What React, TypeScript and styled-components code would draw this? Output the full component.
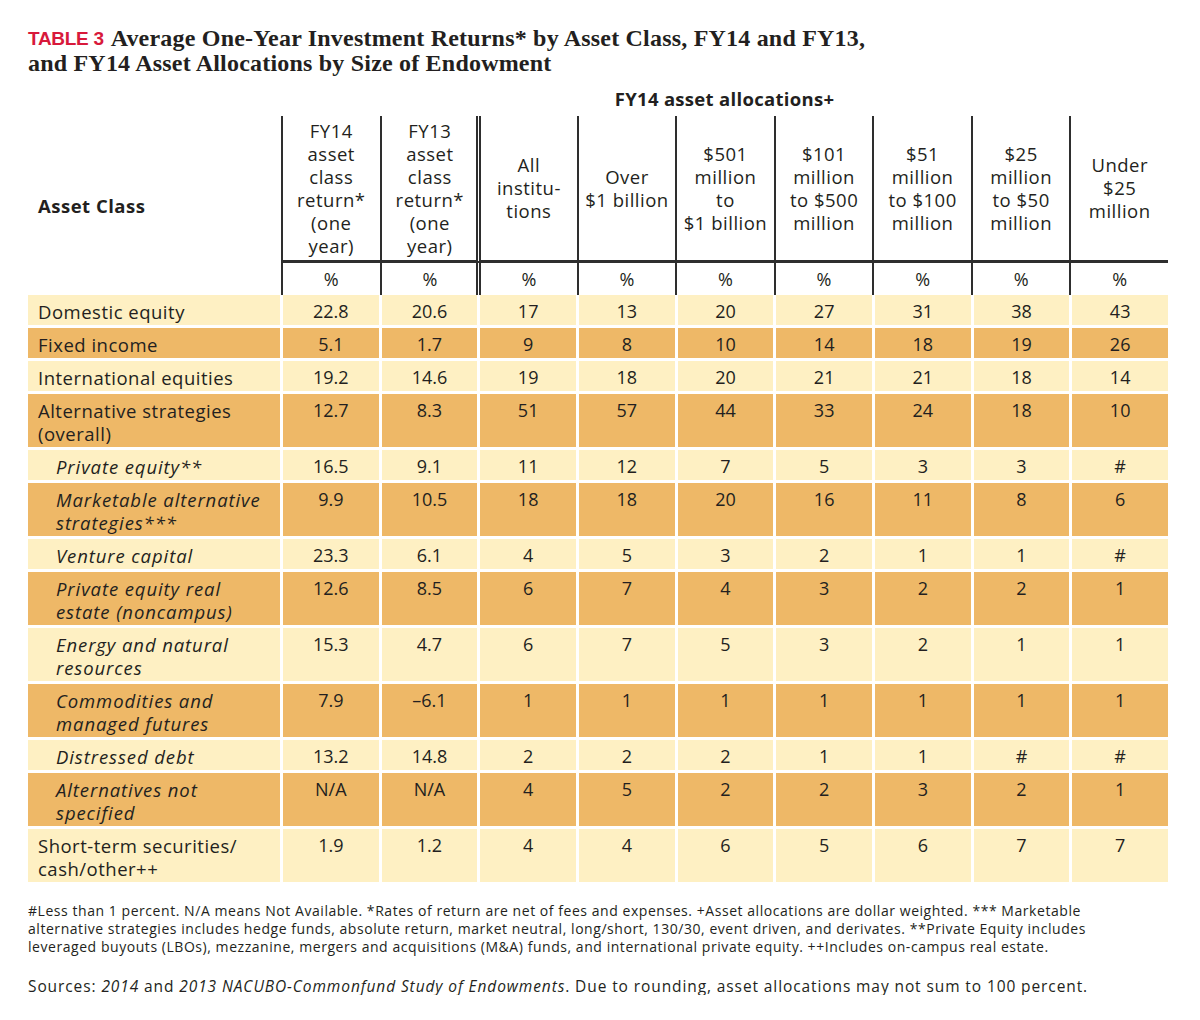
import React from 'react';
import styled, { createGlobalStyle } from 'styled-components';

const GlobalStyle = createGlobalStyle`
  html, body { margin: 0; padding: 0; background: #ffffff; }
  body {
    font-family: "Open Sans", "Liberation Sans", sans-serif;
    color: #231f20;
  }
`;

const Page = styled.div`
  width: 1200px;
  box-sizing: border-box;
  padding: 26px 0 0 28px;
`;

const Title = styled.h1`
  margin: 0;
  font-family: "Liberation Serif", serif;
  font-weight: 700;
  font-size: 24px;
  line-height: 24px;
  letter-spacing: 0.2px;
  color: #231f20;
`;

const TableLabel = styled.span`
  font-family: "Liberation Sans", "Open Sans", sans-serif;
  font-weight: 700;
  font-size: 19px;
  letter-spacing: -0.3px;
  vertical-align: 1.5px;
  color: #d8193b;
  margin-right: 7px;
`;

const Table = styled.div`
  width: 1140px;
  margin-top: 14px;
`;

const HeaderGrid = styled.div`
  display: grid;
  grid-template-columns: 253px repeat(9, 1fr);
  grid-template-rows: 23px 151px 32px;
`;

const GroupTitle = styled.div`
  grid-column: 2 / -1;
  grid-row: 1;
  text-align: center;
  font-weight: 700;
  font-size: 18.5px;
  letter-spacing: 0.3px;
  line-height: 23px;
  margin-top: -2px;
`;

const CornerLabel = styled.div`
  grid-column: 1;
  grid-row: 2 / 4;
  display: flex;
  align-items: center;
  padding: 4px 0 0 10px;
  font-weight: 700;
  font-size: 18.5px;
  letter-spacing: 0.5px;
`;

const HeadCell = styled.div<{ $double?: boolean }>`
  grid-row: 2;
  box-sizing: border-box;
  display: flex;
  align-items: center;
  justify-content: center;
  text-align: center;
  font-size: 18.5px;
  letter-spacing: 0.5px;
  line-height: 23px;
  white-space: nowrap;
  border-left: ${p => (p.$double ? '5px double #2e2e2e' : '2px solid #2e2e2e')};
  margin-left: ${p => (p.$double ? '-2px' : '0')};
  border-bottom: 3px solid #2e2e2e;
  margin-top: 4px;
`;

const UnitCell = styled.div<{ $double?: boolean }>`
  grid-row: 3;
  box-sizing: border-box;
  display: flex;
  align-items: center;
  justify-content: center;
  font-size: 18px;
  border-left: ${p => (p.$double ? '5px double #2e2e2e' : '2px solid #2e2e2e')};
  margin-left: ${p => (p.$double ? '-2px' : '0')};
`;

const BodyGrid = styled.div`
  display: grid;
  grid-template-columns: 252px repeat(9, 1fr);
  gap: 3px;
`;

const Cell = styled.div<{ $tone: 'light' | 'dark' }>`
  background: ${p => (p.$tone === 'light' ? '#fef0c3' : '#eeb867')};
  padding: 5px 0 2px;
  font-size: 18px;
  line-height: 23px;
  text-align: center;
`;

const LabelCell = styled(Cell)<{ $sub?: boolean }>`
  text-align: left;
  padding-left: ${p => (p.$sub ? '28px' : '10px')};
  font-style: ${p => (p.$sub ? 'italic' : 'normal')};
  font-size: 18.5px;
  letter-spacing: ${p => (p.$sub ? '0.9px' : '0.5px')};
  white-space: nowrap;
`;

const Notes = styled.p`
  margin: 20px 0 0;
  font-size: 14px;
  line-height: 18px;
  letter-spacing: 0.55px;
  white-space: nowrap;
`;

const Sources = styled.p`
  margin: 21px 0 0;
  font-size: 15.5px;
  line-height: 18px;
  letter-spacing: 0.9px;
  white-space: nowrap;
`;

type Row = { label: string[]; sub?: boolean; values: string[] };

const headers: { lines: string[]; double?: boolean }[] = [
  { lines: ['FY14', 'asset', 'class', 'return*', '(one', 'year)'] },
  { lines: ['FY13', 'asset', 'class', 'return*', '(one', 'year)'] },
  { lines: ['All', 'institu-', 'tions'], double: true },
  { lines: ['Over', '$1 billion'] },
  { lines: ['$501', 'million', 'to', '$1 billion'] },
  { lines: ['$101', 'million', 'to $500', 'million'] },
  { lines: ['$51', 'million', 'to $100', 'million'] },
  { lines: ['$25', 'million', 'to $50', 'million'] },
  { lines: ['Under', '$25', 'million'] },
];

const rows: Row[] = [
  { label: ['Domestic equity'], values: ['22.8', '20.6', '17', '13', '20', '27', '31', '38', '43'] },
  { label: ['Fixed income'], values: ['5.1', '1.7', '9', '8', '10', '14', '18', '19', '26'] },
  { label: ['International equities'], values: ['19.2', '14.6', '19', '18', '20', '21', '21', '18', '14'] },
  { label: ['Alternative strategies', '(overall)'], values: ['12.7', '8.3', '51', '57', '44', '33', '24', '18', '10'] },
  { label: ['Private equity**'], sub: true, values: ['16.5', '9.1', '11', '12', '7', '5', '3', '3', '#'] },
  { label: ['Marketable alternative', 'strategies***'], sub: true, values: ['9.9', '10.5', '18', '18', '20', '16', '11', '8', '6'] },
  { label: ['Venture capital'], sub: true, values: ['23.3', '6.1', '4', '5', '3', '2', '1', '1', '#'] },
  { label: ['Private equity real', 'estate (noncampus)'], sub: true, values: ['12.6', '8.5', '6', '7', '4', '3', '2', '2', '1'] },
  { label: ['Energy and natural', 'resources'], sub: true, values: ['15.3', '4.7', '6', '7', '5', '3', '2', '1', '1'] },
  { label: ['Commodities and', 'managed futures'], sub: true, values: ['7.9', '\u20136.1', '1', '1', '1', '1', '1', '1', '1'] },
  { label: ['Distressed debt'], sub: true, values: ['13.2', '14.8', '2', '2', '2', '1', '1', '#', '#'] },
  { label: ['Alternatives not', 'specified'], sub: true, values: ['N/A', 'N/A', '4', '5', '2', '2', '3', '2', '1'] },
  { label: ['Short-term securities/', 'cash/other++'], values: ['1.9', '1.2', '4', '4', '6', '5', '6', '7', '7'] },
];

const Lines = ({ lines }: { lines: string[] }) => (
  <>
    {lines.map((l, i) => (
      <React.Fragment key={i}>
        {i > 0 && <br />}
        {l}
      </React.Fragment>
    ))}
  </>
);

export default function App() {
  return (
    <>
      <GlobalStyle />
      <Page>
        <Title>
          <TableLabel>TABLE 3</TableLabel>
          Average One-Year Investment Returns* by Asset Class, FY14 and FY13,
          <br />
          and FY14 Asset Allocations by Size of Endowment
        </Title>
        <Table>
          <HeaderGrid>
            <GroupTitle>FY14 asset allocations+</GroupTitle>
            <CornerLabel>Asset Class</CornerLabel>
            {headers.map((h, i) => (
              <HeadCell key={i} $double={h.double}>
                <div>
                  <Lines lines={h.lines} />
                </div>
              </HeadCell>
            ))}
            {headers.map((h, i) => (
              <UnitCell key={i} $double={h.double}>%</UnitCell>
            ))}
          </HeaderGrid>
          <BodyGrid>
            {rows.map((r, ri) => {
              const tone = ri % 2 === 0 ? 'light' : 'dark';
              return (
                <React.Fragment key={ri}>
                  <LabelCell $tone={tone} $sub={r.sub}>
                    <Lines lines={r.label} />
                  </LabelCell>
                  {r.values.map((v, vi) => (
                    <Cell key={vi} $tone={tone}>{v}</Cell>
                  ))}
                </React.Fragment>
              );
            })}
          </BodyGrid>
        </Table>
        <Notes>
          #Less than 1 percent. N/A means Not Available. *Rates of return are net of fees and expenses. +Asset allocations are dollar weighted. *** Marketable
          <br />
          alternative strategies includes hedge funds, absolute return, market neutral, long/short, 130/30, event driven, and derivates. **Private Equity includes
          <br />
          leveraged buyouts (LBOs), mezzanine, mergers and acquisitions (M&amp;A) funds, and international private equity. ++Includes on-campus real estate.
        </Notes>
        <Sources>
          Sources: <i>2014</i> and <i>2013 NACUBO-Commonfund Study of Endowments</i>. Due to rounding, asset allocations may not sum to 100 percent.
        </Sources>
      </Page>
    </>
  );
}
